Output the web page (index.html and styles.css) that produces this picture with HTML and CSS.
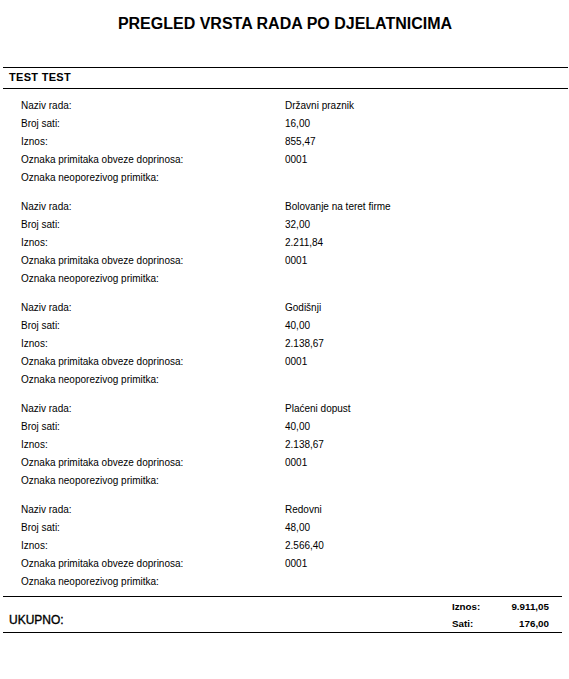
FILE: index.html
```html
<!DOCTYPE html>
<html>
<head>
<meta charset="utf-8">
<link rel="stylesheet" href="styles.css">
</head>
<body>
<div class="page">
  <h1 class="title">PREGLED VRSTA RADA PO DJELATNICIMA</h1>
  <div class="emp">TEST TEST</div>
  <div class="blocks">
    <div class="block">
      <div class="row"><span class="lbl">Naziv rada:</span><span class="val">Državni praznik</span></div>
      <div class="row"><span class="lbl">Broj sati:</span><span class="val">16,00</span></div>
      <div class="row"><span class="lbl">Iznos:</span><span class="val">855,47</span></div>
      <div class="row"><span class="lbl">Oznaka primitaka obveze doprinosa:</span><span class="val">0001</span></div>
      <div class="row"><span class="lbl">Oznaka neoporezivog primitka:</span><span class="val"></span></div>
    </div>
    <div class="block">
      <div class="row"><span class="lbl">Naziv rada:</span><span class="val">Bolovanje na teret firme</span></div>
      <div class="row"><span class="lbl">Broj sati:</span><span class="val">32,00</span></div>
      <div class="row"><span class="lbl">Iznos:</span><span class="val">2.211,84</span></div>
      <div class="row"><span class="lbl">Oznaka primitaka obveze doprinosa:</span><span class="val">0001</span></div>
      <div class="row"><span class="lbl">Oznaka neoporezivog primitka:</span><span class="val"></span></div>
    </div>
    <div class="block">
      <div class="row"><span class="lbl">Naziv rada:</span><span class="val">Godišnji</span></div>
      <div class="row"><span class="lbl">Broj sati:</span><span class="val">40,00</span></div>
      <div class="row"><span class="lbl">Iznos:</span><span class="val">2.138,67</span></div>
      <div class="row"><span class="lbl">Oznaka primitaka obveze doprinosa:</span><span class="val">0001</span></div>
      <div class="row"><span class="lbl">Oznaka neoporezivog primitka:</span><span class="val"></span></div>
    </div>
    <div class="block">
      <div class="row"><span class="lbl">Naziv rada:</span><span class="val">Plaćeni dopust</span></div>
      <div class="row"><span class="lbl">Broj sati:</span><span class="val">40,00</span></div>
      <div class="row"><span class="lbl">Iznos:</span><span class="val">2.138,67</span></div>
      <div class="row"><span class="lbl">Oznaka primitaka obveze doprinosa:</span><span class="val">0001</span></div>
      <div class="row"><span class="lbl">Oznaka neoporezivog primitka:</span><span class="val"></span></div>
    </div>
    <div class="block">
      <div class="row"><span class="lbl">Naziv rada:</span><span class="val">Redovni</span></div>
      <div class="row"><span class="lbl">Broj sati:</span><span class="val">48,00</span></div>
      <div class="row"><span class="lbl">Iznos:</span><span class="val">2.566,40</span></div>
      <div class="row"><span class="lbl">Oznaka primitaka obveze doprinosa:</span><span class="val">0001</span></div>
      <div class="row"><span class="lbl">Oznaka neoporezivog primitka:</span><span class="val"></span></div>
    </div>
  </div>
  <div class="total">
    <div class="total-label">UKUPNO:</div>
    <div class="sums">
      <div class="sum"><span class="sum-lbl">Iznos:</span><span class="sum-val">9.911,05</span></div>
      <div class="sum"><span class="sum-lbl">Sati:</span><span class="sum-val">176,00</span></div>
    </div>
  </div>
</div>
</body>
</html>
```
FILE: styles.css
```css
html, body {
  margin: 0;
  padding: 0;
  background: #fff;
}
body {
  font-family: "Liberation Sans", Arial, sans-serif;
  color: #000;
  width: 569px;
  height: 679px;
}
.page {
  padding-top: 14px;
}
.title {
  margin: 0;
  font-size: 16px;
  font-weight: bold;
  text-align: center;
  letter-spacing: 0;
  line-height: 20px;
  padding-left: 1px;
}
.emp {
  margin: 33px 1px 0 3px;
  border-top: 1px solid #000;
  border-bottom: 1px solid #000;
  height: 20px;
  line-height: 18px;
  padding-left: 6px;
  font-size: 11px;
  font-weight: bold;
  letter-spacing: 0.3px;
}
.blocks {
  padding-top: 8px;
  display: flex;
  flex-direction: column;
  gap: 11px;
}
.row {
  display: flex;
  height: 18px;
  line-height: 18px;
  font-size: 10px;
  letter-spacing: 0;
}
.lbl {
  width: 264px;
  padding-left: 21px;
}
.val {
  flex: 1;
}
.total {
  margin: 5px 7px 0 3px;
  border-top: 1px solid #000;
  border-bottom: 1px solid #000;
  height: 35px;
  display: flex;
  justify-content: space-between;
}
.total-label {
  padding-left: 6px;
  padding-top: 16px;
  font-size: 12px;
  font-weight: normal;
  -webkit-text-stroke: 0.35px #000;
}
.sums {
  padding-top: 1px;
  display: flex;
  flex-direction: column;
  padding-right: 13px;
}
.sum {
  display: flex;
  height: 18px;
  line-height: 17px;
  font-size: 9.8px;
  font-weight: bold;
}
.sum-lbl {
  width: 50px;
}
.sum-val {
  width: 47px;
  text-align: right;
}
```
